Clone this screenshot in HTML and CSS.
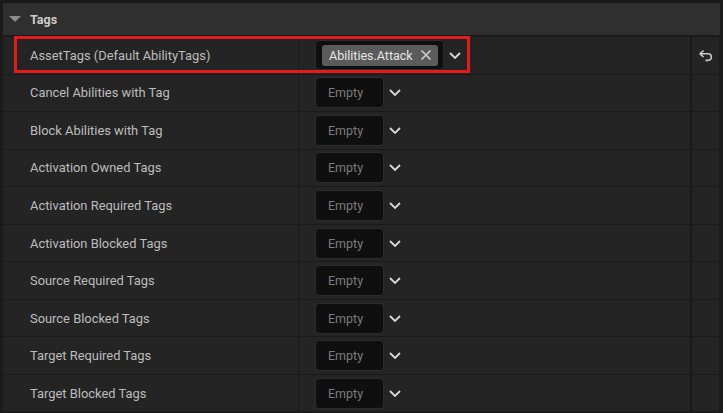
FILE: index.html
```html
<!DOCTYPE html>
<html lang="en">
<head>
<meta charset="UTF-8">
<title>Tags</title>
<link rel="stylesheet" href="styles.css">
</head>
<body>
<div class="panel">
  <div class="header">
    <span class="caret"></span>
    <span class="title">Tags</span>
  </div>
  <div class="rows">
    <div class="row">
      <div class="name">AssetTags (Default AbilityTags)</div>
      <div class="value">
        <div class="tagbox filled">
          <span class="pill">Abilities.Attack
            <svg class="x" width="12" height="12" viewBox="0 0 12 12"><path d="M1.5 1.5 L10.5 10.5 M10.5 1.5 L1.5 10.5" stroke="#cfcfcf" stroke-width="1.6" fill="none"/></svg>
          </span>
        </div>
        <svg class="chev" width="12" height="7" viewBox="0 0 12 7"><polyline points="1,1 6,6 11,1" stroke="#d8d8d8" stroke-width="1.8" fill="none"/></svg>
      </div>
      <div class="reset">
        <svg width="16" height="13" viewBox="0 0 16 13"><path d="M5.5 1.5 L2 4.8 L5.5 8 M2 4.8 H10 A3.3 3.3 0 0 1 10 11.4 H7.5" stroke="#c8c8c8" stroke-width="1.6" fill="none" stroke-linejoin="round"/></svg>
      </div>
    </div>
    <div class="row">
      <div class="name">Cancel Abilities with Tag</div>
      <div class="value"><div class="tagbox">Empty</div><svg class="chev" width="12" height="7" viewBox="0 0 12 7"><polyline points="1,1 6,6 11,1" stroke="#d8d8d8" stroke-width="1.8" fill="none"/></svg></div>
      <div class="reset"></div>
    </div>
    <div class="row">
      <div class="name">Block Abilities with Tag</div>
      <div class="value"><div class="tagbox">Empty</div><svg class="chev" width="12" height="7" viewBox="0 0 12 7"><polyline points="1,1 6,6 11,1" stroke="#d8d8d8" stroke-width="1.8" fill="none"/></svg></div>
      <div class="reset"></div>
    </div>
    <div class="row">
      <div class="name">Activation Owned Tags</div>
      <div class="value"><div class="tagbox">Empty</div><svg class="chev" width="12" height="7" viewBox="0 0 12 7"><polyline points="1,1 6,6 11,1" stroke="#d8d8d8" stroke-width="1.8" fill="none"/></svg></div>
      <div class="reset"></div>
    </div>
    <div class="row">
      <div class="name">Activation Required Tags</div>
      <div class="value"><div class="tagbox">Empty</div><svg class="chev" width="12" height="7" viewBox="0 0 12 7"><polyline points="1,1 6,6 11,1" stroke="#d8d8d8" stroke-width="1.8" fill="none"/></svg></div>
      <div class="reset"></div>
    </div>
    <div class="row">
      <div class="name">Activation Blocked Tags</div>
      <div class="value"><div class="tagbox">Empty</div><svg class="chev" width="12" height="7" viewBox="0 0 12 7"><polyline points="1,1 6,6 11,1" stroke="#d8d8d8" stroke-width="1.8" fill="none"/></svg></div>
      <div class="reset"></div>
    </div>
    <div class="row">
      <div class="name">Source Required Tags</div>
      <div class="value"><div class="tagbox">Empty</div><svg class="chev" width="12" height="7" viewBox="0 0 12 7"><polyline points="1,1 6,6 11,1" stroke="#d8d8d8" stroke-width="1.8" fill="none"/></svg></div>
      <div class="reset"></div>
    </div>
    <div class="row">
      <div class="name">Source Blocked Tags</div>
      <div class="value"><div class="tagbox">Empty</div><svg class="chev" width="12" height="7" viewBox="0 0 12 7"><polyline points="1,1 6,6 11,1" stroke="#d8d8d8" stroke-width="1.8" fill="none"/></svg></div>
      <div class="reset"></div>
    </div>
    <div class="row">
      <div class="name">Target Required Tags</div>
      <div class="value"><div class="tagbox">Empty</div><svg class="chev" width="12" height="7" viewBox="0 0 12 7"><polyline points="1,1 6,6 11,1" stroke="#d8d8d8" stroke-width="1.8" fill="none"/></svg></div>
      <div class="reset"></div>
    </div>
    <div class="row">
      <div class="name">Target Blocked Tags</div>
      <div class="value"><div class="tagbox">Empty</div><svg class="chev" width="12" height="7" viewBox="0 0 12 7"><polyline points="1,1 6,6 11,1" stroke="#d8d8d8" stroke-width="1.8" fill="none"/></svg></div>
      <div class="reset"></div>
    </div>
  </div>
  <div class="highlight"></div>
</div>
</body>
</html>
```
FILE: styles.css
```css
body {
  margin: 0;
  background-color: #1a1a1a;
  font-family: Roboto, "Liberation Sans", sans-serif;
}
.panel {
  position: relative;
  width: 723px;
  height: 413px;
  box-sizing: border-box;
  padding: 3px 3px 0 3px;
  overflow: hidden;
}
/* section header */
.header {
  height: 32px;
  margin-bottom: 2px;
  background-color: #2f2f2f;
  display: flex;
  align-items: center;
}
.caret {
  width: 0;
  height: 0;
  margin-left: 6px;
  margin-right: 9px;
  border-left: 6px solid transparent;
  border-right: 6px solid transparent;
  border-top: 6px solid #8c8c8c;
}
.title {
  color: #cdcdcd;
  font-size: 12.5px;
  font-weight: bold;
}
.rows {
  display: flex;
  flex-direction: column;
  gap: 1px;
}
.row {
  height: 36.55px;
  display: grid;
  grid-template-columns: 295px 391px 28px;
  column-gap: 1px;
}
.row > div {
  background-color: #242424;
  display: flex;
  align-items: center;
}
.name {
  padding-left: 27px;
  color: #bdbdbd;
  font-size: 12.9px;
}
.value {
  padding-left: 16px;
}
.reset {
  margin-left: 1px;
  justify-content: center;
}
.tagbox {
  box-sizing: border-box;
  width: 69px;
  height: 31px;
  padding-left: 12px;
  display: flex;
  align-items: center;
  background-color: #0f0f0f;
  border: 1px solid #2c2c2c;
  border-radius: 4px;
  color: #7c7c7c;
  font-size: 12.5px;
}
.tagbox.filled {
  width: 129px;
  height: 30px;
  padding-left: 6px;
}
.pill {
  height: 21px;
  width: 116px;
  box-sizing: border-box;
  padding-left: 7px;
  display: flex;
  align-items: center;
  background-color: #5b5b5b;
  border-radius: 3px;
  color: #e6e6e6;
  font-size: 12.5px;
}
.x {
  margin-left: 7px;
}
.chev {
  margin-left: 5px;
}
/* red annotation box */
.highlight {
  position: absolute;
  left: 14px;
  top: 36px;
  width: 456px;
  height: 37px;
  box-sizing: border-box;
  border: 3px solid #e31b1b;
}
```
